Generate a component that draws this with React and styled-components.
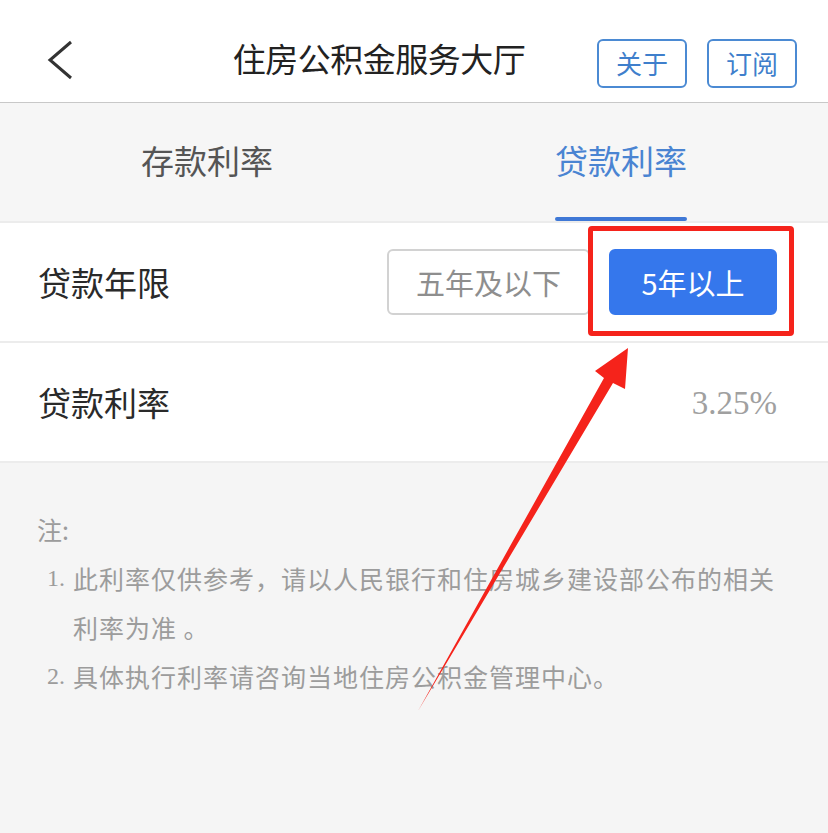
import React from "react";
import styled, { createGlobalStyle } from "styled-components";

const Global = createGlobalStyle`
  html, body { margin: 0; padding: 0; background: #f5f5f5; }
  body { font-family: "Noto Sans CJK SC", "Noto Sans", sans-serif; }
  * { box-sizing: border-box; }
`;

const Page = styled.div`
  position: relative;
  width: 828px;
  min-height: 833px;
  background: #f5f5f5;
  overflow: hidden;
`;

const Header = styled.header`
  height: 103px;
  padding-top: 18px;
  background: #fff;
  border-bottom: 1px solid #c8c8c8;
  display: grid;
  grid-template-columns: 190px 1fr 240px;
  align-items: center;
`;

const Back = styled.button`
  border: 0;
  background: none;
  padding: 0 0 0 44px;
  height: 50px;
  display: flex;
  align-items: center;
  cursor: pointer;
`;

const Title = styled.h1`
  margin: 0;
  font-size: 33px;
  font-weight: 400;
  color: #222;
  text-align: center;
  letter-spacing: -0.5px;
  padding-right: 20px;
  padding-bottom: 4px;
`;

const Actions = styled.div`
  display: flex;
  gap: 20px;
  justify-content: flex-end;
  padding-right: 31px;
  margin-top: 6px;
`;

const OutlineBtn = styled.button`
  width: 90px;
  height: 49px;
  border: 2px solid #4b8ad3;
  border-radius: 6px;
  background: #fff;
  color: #3f7fcc;
  font-family: inherit;
  font-size: 26px;
  padding: 0;
  line-height: 1;
`;

const Tabs = styled.nav`
  height: 120px;
  background: #f6f6f6;
  display: grid;
  grid-template-columns: 1fr 1fr;
  border-bottom: 2px solid #ececec;
`;

const Tab = styled.div`
  display: flex;
  align-items: center;
  justify-content: center;
  font-size: 33px;
  color: ${(p) => (p.$active ? "#4a84d2" : "#555")};
  padding-bottom: 4px;
`;

const TabLabel = styled.span`
  position: relative;
  height: 100%;
  display: flex;
  align-items: center;
  &::after {
    content: "";
    display: ${(p) => (p.$active ? "block" : "none")};
    position: absolute;
    left: 0;
    right: 0;
    bottom: -4px;
    height: 4px;
    border-radius: 2px;
    background: #3f78d6;
  }
`;

const Row = styled.div`
  height: 120px;
  background: #fff;
  border-bottom: 2px solid #ececec;
  display: flex;
  align-items: center;
  justify-content: space-between;
  padding: 0 51px 0 38px;
`;

const Label = styled.span`
  font-size: 33px;
  color: #2a2a2a;
`;

const Segments = styled.div`
  display: flex;
  gap: 19px;
  align-items: center;
`;

const Segment = styled.button`
  height: 66px;
  width: ${(p) => (p.$active ? "168px" : "203px")};
  border-radius: 6px;
  border: 2px solid ${(p) => (p.$active ? "#3577ec" : "#d2d2d2")};
  background: ${(p) => (p.$active ? "#3577ec" : "#fff")};
  color: ${(p) => (p.$active ? "#fff" : "#8e8e8e")};
  font-family: inherit;
  font-size: 29px;
  padding: 0;
  line-height: 1;
`;

const Rate = styled.span`
  font-family: "Liberation Serif", "Times New Roman", serif;
  font-size: 33px;
  color: #a0a0a0;
  padding-top: 2px;
`;

const Notes = styled.section`
  padding: 42px 40px 0 37px;
  color: #9c9c9c;
  font-size: 25px;
  line-height: 49px;
`;

const NoteHead = styled.div`
  font-size: 25px;
`;

const NoteList = styled.ol`
  margin: 0;
  padding: 0 0 0 10px;
  list-style: none;
`;

const NoteItem = styled.li`
  display: grid;
  grid-template-columns: 26px 1fr;
  letter-spacing: 1px;
`;

const Num = styled.span`
  font-family: "Liberation Serif", serif;
  font-size: 24px;
  letter-spacing: 0;
`;

const Highlight = styled.div`
  position: absolute;
  left: 588px;
  top: 226px;
  width: 206px;
  height: 110px;
  border: 5px solid #f5231b;
  border-radius: 4px;
  pointer-events: none;
`;

const ArrowLayer = styled.svg`
  position: absolute;
  left: 0;
  top: 0;
  pointer-events: none;
`;

export default function App() {
  return (
    <Page>
      <Global />
      <Header>
        <Back aria-label="返回">
          <svg width="30" height="40" viewBox="0 0 30 40">
            <polyline points="27,2 6,20 27,38" fill="none" stroke="#333" strokeWidth="3" />
          </svg>
        </Back>
        <Title>住房公积金服务大厅</Title>
        <Actions>
          <OutlineBtn>关于</OutlineBtn>
          <OutlineBtn>订阅</OutlineBtn>
        </Actions>
      </Header>
      <Tabs>
        <Tab>
          <TabLabel>存款利率</TabLabel>
        </Tab>
        <Tab $active>
          <TabLabel $active>贷款利率</TabLabel>
        </Tab>
      </Tabs>
      <Row>
        <Label>贷款年限</Label>
        <Segments>
          <Segment>五年及以下</Segment>
          <Segment $active>5年以上</Segment>
        </Segments>
      </Row>
      <Row>
        <Label>贷款利率</Label>
        <Rate>3.25%</Rate>
      </Row>
      <Notes>
        <NoteHead>注:</NoteHead>
        <NoteList>
          <NoteItem>
            <Num>1.</Num>
            <span>此利率仅供参考，请以人民银行和住房城乡建设部公布的相关利率为准 。</span>
          </NoteItem>
          <NoteItem>
            <Num>2.</Num>
            <span>具体执行利率请咨询当地住房公积金管理中心。</span>
          </NoteItem>
        </NoteList>
      </Notes>
      <Highlight />
      <ArrowLayer width="828" height="833" viewBox="0 0 828 833">
        <polygon
          points="418,711 604,378 595,371 628,348 625,389 613,383"
          fill="#f5231b"
        />
      </ArrowLayer>
    </Page>
  );
}
